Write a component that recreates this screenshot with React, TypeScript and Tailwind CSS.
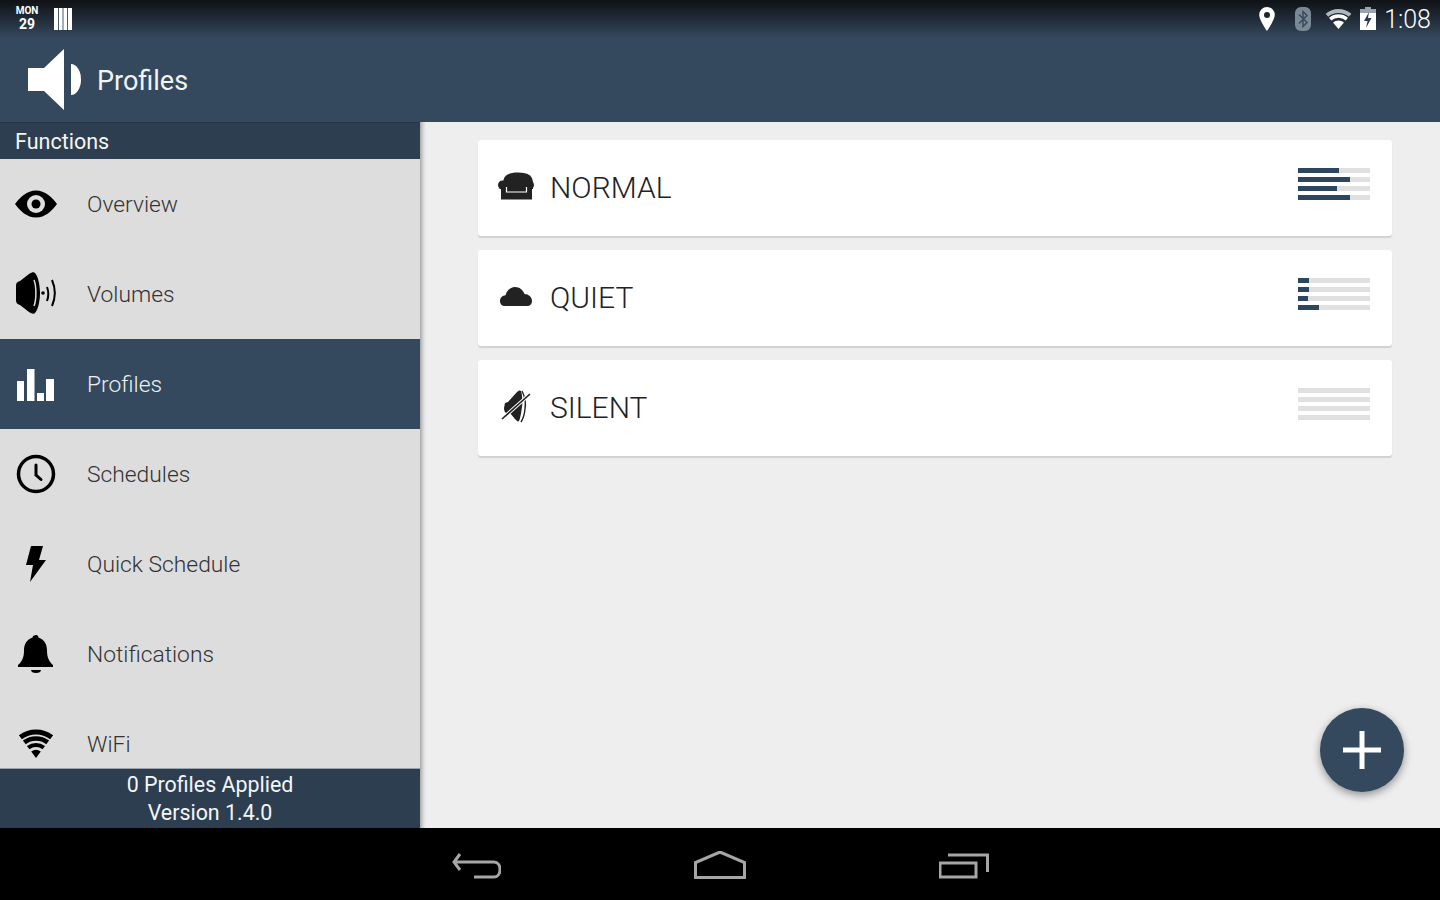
import React from "react";

const wedge = (cx: number, cy: number, r: number, a = 0.6, b = 0.8) =>
  `M${cx - a * r} ${cy - b * r}A${r} ${r} 0 0 1 ${cx + a * r} ${cy - b * r}`;

function Row({ y, label, active, children }: { y: number; label: string; active?: boolean; children: React.ReactNode }) {
  return (
    <div className={`flex items-center h-[90px] shrink-0 ${active ? "bg-[#34495e] text-[#ecf0f1]" : "text-[#333333]"}`}>
      <svg width="72" height="90" viewBox={`0 ${y} 72 90`} className="shrink-0">
        {children}
      </svg>
      <span className="ml-[15px] pt-[2px] text-[22.8px] font-light leading-none">{label}</span>
    </div>
  );
}

function Card({ y, label, fills, children }: { y: number; label: string; fills: number[]; children: React.ReactNode }) {
  return (
    <div className="h-[96px] flex items-center rounded-[3px] bg-white shadow-[0_2px_1px_rgba(0,0,0,0.12)]">
      <svg width="50" height="96" viewBox={`490 ${y} 50 96`} className="ml-[12px] shrink-0">
        {children}
      </svg>
      <span className="ml-[10px] text-[30px] font-light leading-none text-[#222]">{label}</span>
      <div className="ml-auto mr-[22px] mb-[8px] w-[72px] flex flex-col gap-[4px]">
        {fills.map((f, i) => (
          <div key={i} className="h-[5px] bg-[#e0e0e0]">
            <div className="h-full bg-[#2c4660]" style={{ width: f }} />
          </div>
        ))}
      </div>
    </div>
  );
}

export default function App() {
  return (
    <div className="w-[1440px] h-[900px] flex flex-col overflow-hidden bg-black font-['Roboto',sans-serif]">
      <header className="h-[122px] shrink-0 bg-[#34495e] flex flex-col">
        <div className="h-[38px] shrink-0 flex items-center bg-gradient-to-b from-[#0f1216] to-[#34495e] pl-[16px] pr-[9px] text-white">
          <div className="w-[22px] flex flex-col items-center font-bold leading-none mb-[2px]">
            <span className="text-[10px]">MON</span>
            <span className="text-[14px] mt-[1px]">29</span>
          </div>
          <svg width="20" height="24" viewBox="53 7 20 24" className="ml-[15px]">
            <rect x="54" y="8" width="18" height="22" fill="#fff" />
            <path d="M58.5 8v22M63 8v22M67.500 8v22" stroke="#4a5a6c" strokeWidth="1" />
          </svg>
          <svg width="18" height="26" viewBox="1258 6 18 26" className="ml-auto">
            <path fillRule="evenodd" fill="#fff" d="M1267 7a7.800 7.800 0 0 0-7.800 7.800C1259.200 20 1267 31 1267 31s7.800-11 7.800-16.200A7.800 7.800 0 0 0 1267 7Zm0 5a3 3 0 1 1 0 6 3 3 0 0 1 0-6Z" />
          </svg>
          <svg width="18" height="26" viewBox="1294 6 18 26" className="ml-[18px]">
            <rect x="1295" y="7" width="16" height="24" rx="6" fill="#7b8896" />
            <path d="M1299 14.500l8 8-4 4v-15l4 4-8 8" fill="none" stroke="#3a4b5f" strokeWidth="1.500" />
          </svg>
          <svg width="30" height="24" viewBox="1324 7 30 24" className="ml-[12px]">
            <path d={wedge(1338.5, 29, 18, 0.643, 0.766)} fill="none" stroke="#aeb6bf" strokeWidth="4" />
            <path d={wedge(1338.5, 29, 13, 0.643, 0.766)} fill="none" stroke="#fff" strokeWidth="3.500" />
            <path d="M1338.500 29l-5.500-6.500a8.500 8.500 0 0 1 11 0Z" fill="#fff" />
          </svg>
          <svg width="18" height="26" viewBox="1359 6 18 26" className="ml-[5px]">
            <rect x="1365" y="7" width="6" height="3" fill="#9aa4ae" />
            <rect x="1360" y="9" width="16" height="21" fill="#fff" />
            <rect x="1360" y="9" width="16" height="4" fill="#9aa4ae" />
            <path d="M1369 12l-5 9h3.500l-1.500 7 5.500-10h-3.500Z" fill="#2b3a4b" />
          </svg>
          <span className="ml-[7px] text-[25px] font-light leading-none">1:08</span>
        </div>
        <div className="flex-1 flex items-center pl-[28px] text-white">
          <svg width="54" height="62" viewBox="28 49 54 62" className="shrink-0">
            <path d="M28 68h16l20-19v61L44 91H28Z" fill="#fff" />
            <path d="M71 64a10 15.500 0 0 1 0 31Z" fill="#fff" />
          </svg>
          <span className="ml-[15px] pt-[2px] text-[27px] leading-none text-[#f2f4f6]">Profiles</span>
        </div>
      </header>

      <div className="flex-1 min-h-0 flex relative">
        <aside className="w-[420px] shrink-0 flex flex-col bg-[#dddddd]">
          <div className="h-[37px] shrink-0 flex items-center pl-[15px] pt-[2px] bg-[#2c3e50] text-[21.5px] leading-none text-[#f5f6f7] shadow-[inset_0_1px_0_rgba(0,0,0,0.15)]">
            Functions
          </div>
          <div className="flex-1 min-h-0 overflow-hidden">
            <Row y={159} label="Overview">
              <path d="M15 204C20 197 27 190.500 36 190.500S52 197 57 204C52 211 45 217.500 36 217.500S20 211 15 204Z" fill="#000" />
              <circle cx="36" cy="204" r="9" fill="#ddd" />
              <circle cx="36" cy="204" r="4.500" fill="#000" />
            </Row>
            <Row y={249} label="Volumes">
              <path d="M16 286c0-3 1-4 4-5l9-7c3-2 5-2 6-1 3 3 5 12 5 20s-2 17-5 20c-1 1-3 1-6-1l-9-7c-3-1-4-2-4-5Z" fill="#000" />
              <path d="M34 280c2.500 6 2.500 20 0 26" fill="none" stroke="#ddd" strokeWidth="1.500" />
              <circle cx="43" cy="293" r="1.800" fill="#000" />
              <path d="M47 287c1.500 4 1.500 10 0 14" fill="none" stroke="#000" strokeWidth="2" />
              <path d="M52 280c3.500 8 3.500 18 0 26" fill="none" stroke="#000" strokeWidth="2" />
            </Row>
            <Row y={339} label="Profiles" active>
              <path d="M17 381h7v20h-7ZM27 369h7.500v32H27ZM37 393h7v8h-7ZM46 379h8v22h-8Z" fill="#fff" />
            </Row>
            <Row y={429} label="Schedules">
              <circle cx="36" cy="474" r="17.500" fill="none" stroke="#000" strokeWidth="3.500" />
              <path d="M36 465v10l5 4.500" fill="none" stroke="#000" strokeWidth="3" strokeLinecap="round" />
            </Row>
            <Row y={519} label="Quick Schedule">
              <path d="M31 546h12l-4 14h7l-16 22 3-17h-7Z" fill="#000" />
            </Row>
            <Row y={609} label="Notifications">
              <path d="M36 635c1.500 0 2.500 1 2.500 2.500 6 2 8.500 7 8.500 13 0 7 2 11 6 14.500v2H18v-2c4-3.500 6-7.500 6-14.500 0-6 2.500-11 8.500-13 0-1.500 2-2.500 3.500-2.500Z" fill="#000" />
              <path d="M31 670h10c0 2-2 3-5 3s-5-1-5-3Z" fill="#000" />
            </Row>
            <Row y={699} label="WiFi">
              <path d={wedge(36, 758, 26)} fill="none" stroke="#000" strokeWidth="5" />
              <path d={wedge(36, 758, 19.500)} fill="none" stroke="#000" strokeWidth="4.600" />
              <path d={wedge(36, 758, 13)} fill="none" stroke="#000" strokeWidth="4.200" />
              <path d="M36 758l-4.800-6.400a8 8 0 0 1 9.600 0Z" fill="#000" />
            </Row>
          </div>
          <div className="h-[60px] shrink-0 flex flex-col items-center justify-center bg-[#2c3e50] border-t border-[#9aa3ab] text-[21.4px] leading-[28px] text-[#f5f6f7]">
            <span>0 Profiles Applied</span>
            <span>Version 1.4.0</span>
          </div>
        </aside>
        <div className="w-[6px] shrink-0 bg-gradient-to-r from-[#a8a8a8] via-[#d4d4d4] to-[#eeeeee]" />
        <main className="flex-1 bg-[#eeeeee] pl-[52px] pr-[48px] pt-[18px] flex flex-col gap-[14px]">
          <Card y={140} label="NORMAL" fills={[41, 52, 39, 52]}>
            <path d="M503 184c0-8 4-11.500 15-11.500s15 3.500 15 11.500v5h-30Z" fill="#222" />
            <circle cx="502.500" cy="185" r="4.500" fill="#222" />
            <circle cx="529.500" cy="185" r="4.500" fill="#222" />
            <path d="M501 187h31v12.500h-31Z" fill="#222" />
            <path d="M506.500 187v5h20v-5" fill="none" stroke="#fff" strokeWidth="1.200" />
          </Card>
          <Card y={250} label="QUIET" fills={[10.500, 11, 10, 21]}>
            <path d="M500 301c0-3.500 2.500-5.500 5.500-5.800 1.500-5 5-8.200 9.500-8.200 4.500 0 8 2.800 9.500 7 4 0 7.500 3 7.500 7 0 3-2 5-5 5h-22c-3 0-5-2-5-5Z" fill="#222" />
          </Card>
          <Card y={360} label="SILENT" fills={[0, 0, 0, 0]}>
            <path d="M505 403l3-1 9-10c1.500-1.500 3-2 4-1 1 3 2 10 1 16-1 7-2 12-3 14-1 1-2 0-4-2l-5-6h-3c-2 0-3-2-3-5Z" fill="#222" />
            <path d="M522 391c3 6 4 12 3 18-.5 5-2 10-4 13" fill="none" stroke="#222" strokeWidth="1.400" />
            <path d="M502 419l28-25" stroke="#fff" strokeWidth="3.600" />
            <path d="M502 419l28-25" stroke="#222" strokeWidth="1.600" />
          </Card>
        </main>
        <button className="absolute left-[1320px] top-[586px] w-[84px] h-[84px] rounded-full bg-[#34495e] shadow-[0_3px_8px_rgba(0,0,0,0.4)] flex items-center justify-center">
          <svg width="38" height="38" viewBox="0 0 38 38">
            <path d="M16.500 0h5v16.500H38v5H21.500V38h-5V21.500H0v-5h16.500Z" fill="#fff" />
          </svg>
        </button>
      </div>

      <nav className="h-[72px] shrink-0 bg-black flex items-center justify-center gap-[193px] pt-[2px]">
        <svg width="50" height="27" viewBox="451 852 50 27" fill="none" stroke="#a6a6a6" strokeWidth="3">
          <path d="M460 854l-6 8 6 8M454 862h40c8 0 8 15 0 15h-20" />
        </svg>
        <svg width="52" height="28" viewBox="694 851 52 28" fill="none" stroke="#a6a6a6" strokeWidth="3">
          <path d="M695.500 877.500v-15l24.500-10.500 24.500 10.500v15Z" />
        </svg>
        <svg width="50" height="27" viewBox="940 852 50 27" fill="none" stroke="#a6a6a6" strokeWidth="3">
          <path d="M941 863h36v14h-36ZM949 855h39.500v17" />
        </svg>
      </nav>
    </div>
  );
}
